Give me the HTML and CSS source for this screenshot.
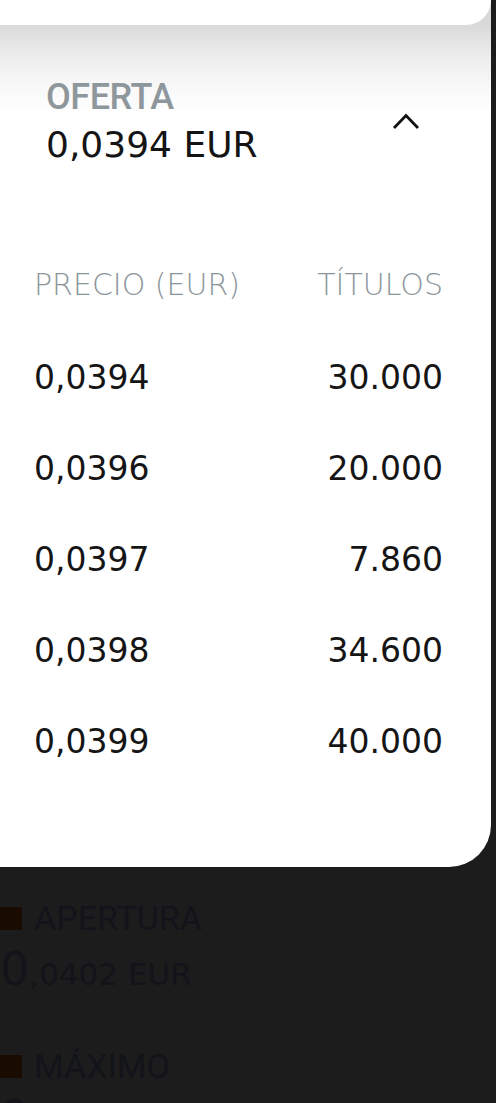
FILE: index.html
```html
<!DOCTYPE html>
<html lang="es">
<head>
<meta charset="utf-8">
<title>Oferta</title>
<link rel="stylesheet" href="styles.css">
</head>
<body>
<div class="sheet">
  <div class="prev-card"></div>
  <section class="offer">
    <div class="offer-head">
      <div class="offer-title">
        <div class="offer-label">OFERTA</div>
        <div class="offer-value">0,0394 EUR</div>
      </div>
      <svg class="chevron" width="28" height="20" viewBox="0 0 28 20" aria-hidden="true">
        <path d="M2 16 L14 3.5 L26 16" fill="none" stroke="#111" stroke-width="2.8"/>
      </svg>
    </div>
    <div class="book">
      <div class="book-row book-header"><span>PRECIO (EUR)</span><span>TÍTULOS</span></div>
      <div class="book-row"><span>0,0394</span><span>30.000</span></div>
      <div class="book-row"><span>0,0396</span><span>20.000</span></div>
      <div class="book-row"><span>0,0397</span><span>7.860</span></div>
      <div class="book-row"><span>0,0398</span><span>34.600</span></div>
      <div class="book-row"><span>0,0399</span><span>40.000</span></div>
    </div>
  </section>
</div>
<div class="page-below">
  <div class="stat">
    <div class="stat-label"><i class="swatch"></i>APERTURA</div>
    <div class="stat-value"><span class="int">0</span>,0402 EUR</div>
  </div>
  <div class="stat">
    <div class="stat-label"><i class="swatch"></i>MÁXIMO</div>
    <div class="stat-value"><span class="int">0</span></div>
  </div>
</div>
</body>
</html>
```

FILE: styles.css
```css
html, body {
  margin: 0;
  padding: 0;
}

body {
  width: 496px;
  height: 1103px;
  overflow: hidden;
  background: #1c1c1c;
  font-family: "DejaVu Sans", "Liberation Sans", sans-serif;
}

/* white bottom sheet with the previous card peeking at the top */
.sheet {
  width: 491px;
  height: 867px;
  box-sizing: border-box;
  border-bottom-right-radius: 42px;
  background: linear-gradient(to bottom, #d6d6d6 0, #dadada 26px, #ececec 55px, #f8f8f8 85px, #ffffff 115px);
  overflow: hidden;
}

.prev-card {
  height: 25px;
  background: #fff;
  border-bottom-right-radius: 40px;
}

.offer {
  padding: 54px 48px 0 34px;
}

.offer-head {
  display: flex;
  justify-content: space-between;
  align-items: flex-start;
  padding-left: 12px;
}

.offer-label {
  font-family: "Roboto", "Liberation Sans", sans-serif;
  font-weight: 500;
  font-size: 36px;
  line-height: 36px;
  letter-spacing: -0.5px;
  color: #8e979c;
}

.offer-value {
  font-size: 36px;
  line-height: 40px;
  color: #141414;
  margin-top: 10px;
}

.chevron {
  margin-top: 33px;
  margin-right: 23px;
}

.book {
  margin-top: 102px;
}

.book-row {
  display: flex;
  justify-content: space-between;
  height: 91px;
  font-size: 33px;
  line-height: 36px;
  color: #151515;
}

.book-header {
  height: 93px;
  color: #8c959a;
  font-weight: 200;
  font-size: 30px;
}

/* dimmed page behind the sheet */
.page-below {
  padding-top: 32px;
  color: #121419;
}

.stat {
  margin-bottom: 53px;
}

.stat-label {
  display: flex;
  align-items: center;
  gap: 12px;
  font-family: "Roboto", "Liberation Sans", sans-serif;
  font-size: 34px;
  line-height: 38px;
}

.swatch {
  width: 22px;
  height: 23px;
  background: #190b02;
}

.stat-value {
  font-size: 31px;
  line-height: 40px;
  margin-top: 12px;
}

.stat-value .int {
  font-size: 46px;
}
```
